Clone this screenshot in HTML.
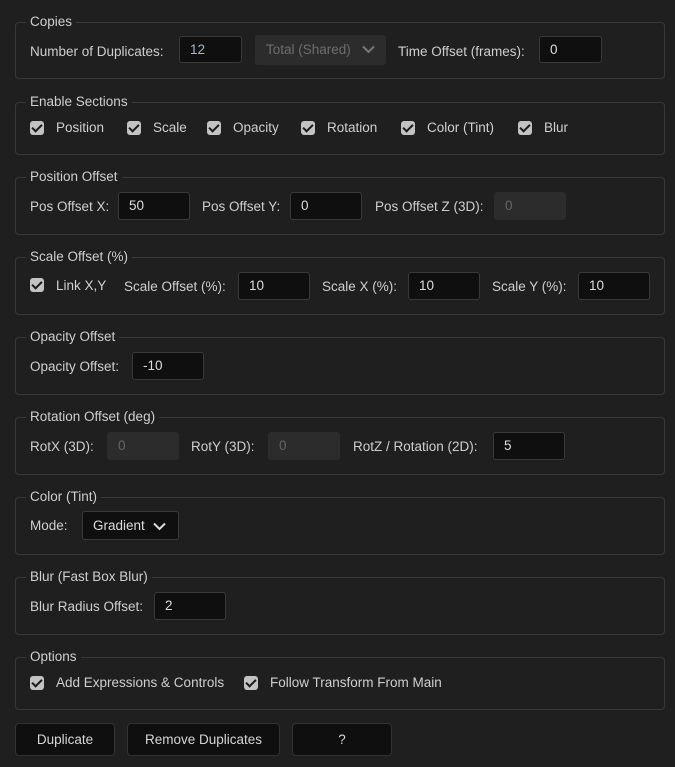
<!DOCTYPE html><html><head><style>
body{margin:0;width:675px;height:767px;background:#1f1f1f;font-family:"Liberation Sans",sans-serif;font-size:13.5px;color:#cfcfcf;position:relative;overflow:hidden}
.p{position:absolute;left:15px;width:648px;border:1px solid #383838;border-radius:4px}
.lg{position:absolute;background:#1f1f1f;padding:0 4px;left:10px;top:-9px;line-height:16px;color:#cfcfcf}
.a{position:absolute;line-height:16px;white-space:nowrap}
.in{position:absolute;background:#0f0f0f;border:1px solid #3a3a3a;border-radius:3px;height:27px;box-sizing:border-box;padding-left:10px;line-height:25px;color:#ddd}
.dis{background:#2c2c2c;border-color:#2c2c2c;color:#666}
.cb{position:absolute;width:14px;height:14px;background:#c3c3c3;border-radius:3px}
.cb:after{content:"";position:absolute;left:4px;top:1px;width:4px;height:8px;border:solid #1a1a1a;border-width:0 2px 2px 0;transform:rotate(45deg)}
.btn{position:absolute;top:723px;height:33px;background:#0f0f0f;border:1px solid #333;border-radius:4px;box-sizing:border-box;text-align:center;line-height:31px;color:#d6d6d6}
</style></head><body>
<div class="p" style="top:22px;height:55px"><span class="lg">Copies</span></div>
<span class="a" style="left:30px;top:44px">Number of Duplicates:</span>
<div class="in" style="left:179px;top:36px;width:63px;color:#9fb8d6">12</div>
<div class="in dis" style="left:255px;top:35px;width:131px;height:30px;line-height:28px;color:#6e6e6e">Total (Shared)<svg style="position:absolute;left:106px;top:9px" width="13" height="9"><path d="M1 1.5L6.5 7 12 1.5" stroke="#777" stroke-width="2" fill="none"/></svg></div>
<span class="a" style="left:398px;top:44px">Time Offset (frames):</span>
<div class="in" style="left:539px;top:36px;width:63px">0</div>

<div class="p" style="top:102px;height:51px"><span class="lg">Enable Sections</span></div>
<div class="cb" style="left:30px;top:121px"></div><span class="a" style="left:56px;top:120px">Position</span>
<div class="cb" style="left:127px;top:121px"></div><span class="a" style="left:153px;top:120px">Scale</span>
<div class="cb" style="left:207px;top:121px"></div><span class="a" style="left:233px;top:120px">Opacity</span>
<div class="cb" style="left:301px;top:121px"></div><span class="a" style="left:327px;top:120px">Rotation</span>
<div class="cb" style="left:401px;top:121px"></div><span class="a" style="left:427px;top:120px">Color (Tint)</span>
<div class="cb" style="left:518px;top:121px"></div><span class="a" style="left:544px;top:120px">Blur</span>

<div class="p" style="top:177px;height:56px"><span class="lg">Position Offset</span></div>
<span class="a" style="left:30px;top:199px">Pos Offset X:</span>
<div class="in" style="left:118px;top:192px;width:72px;height:28px">50</div>
<span class="a" style="left:202px;top:199px">Pos Offset Y:</span>
<div class="in" style="left:290px;top:192px;width:72px;height:28px">0</div>
<span class="a" style="left:375px;top:199px">Pos Offset Z (3D):</span>
<div class="in dis" style="left:494px;top:192px;width:72px;height:28px">0</div>

<div class="p" style="top:257px;height:56px"><span class="lg">Scale Offset (%)</span></div>
<div class="cb" style="left:30px;top:278px"></div><span class="a" style="left:56px;top:278px">Link X,Y</span>
<span class="a" style="left:124px;top:279px">Scale Offset (%):</span>
<div class="in" style="left:238px;top:272px;width:72px;height:28px">10</div>
<span class="a" style="left:322px;top:279px">Scale X (%):</span>
<div class="in" style="left:408px;top:272px;width:72px;height:28px">10</div>
<span class="a" style="left:492px;top:279px">Scale Y (%):</span>
<div class="in" style="left:578px;top:272px;width:72px;height:28px">10</div>

<div class="p" style="top:337px;height:56px"><span class="lg">Opacity Offset</span></div>
<span class="a" style="left:30px;top:359px">Opacity Offset:</span>
<div class="in" style="left:132px;top:352px;width:72px;height:28px">-10</div>

<div class="p" style="top:417px;height:56px"><span class="lg">Rotation Offset (deg)</span></div>
<span class="a" style="left:30px;top:439px">RotX (3D):</span>
<div class="in dis" style="left:107px;top:432px;width:72px;height:28px">0</div>
<span class="a" style="left:191px;top:439px">RotY (3D):</span>
<div class="in dis" style="left:268px;top:432px;width:72px;height:28px">0</div>
<span class="a" style="left:353px;top:439px">RotZ / Rotation (2D):</span>
<div class="in" style="left:493px;top:432px;width:72px;height:28px">5</div>

<div class="p" style="top:497px;height:56px"><span class="lg">Color (Tint)</span></div>
<span class="a" style="left:30px;top:518px">Mode:</span>
<div class="in" style="left:82px;top:511px;width:97px;height:29px;line-height:27px">Gradient<svg style="position:absolute;left:70px;top:10px" width="13" height="9"><path d="M1 1.5L6.5 7 12 1.5" stroke="#ddd" stroke-width="2" fill="none"/></svg></div>

<div class="p" style="top:577px;height:56px"><span class="lg">Blur (Fast Box Blur)</span></div>
<span class="a" style="left:30px;top:599px">Blur Radius Offset:</span>
<div class="in" style="left:154px;top:592px;width:72px;height:28px">2</div>

<div class="p" style="top:657px;height:51px"><span class="lg">Options</span></div>
<div class="cb" style="left:30px;top:676px"></div><span class="a" style="left:56px;top:675px">Add Expressions &amp; Controls</span>
<div class="cb" style="left:244px;top:676px"></div><span class="a" style="left:270px;top:675px">Follow Transform From Main</span>

<div class="btn" style="left:15px;width:100px">Duplicate</div>
<div class="btn" style="left:127px;width:153px">Remove Duplicates</div>
<div class="btn" style="left:292px;width:100px">?</div>
</body></html>
